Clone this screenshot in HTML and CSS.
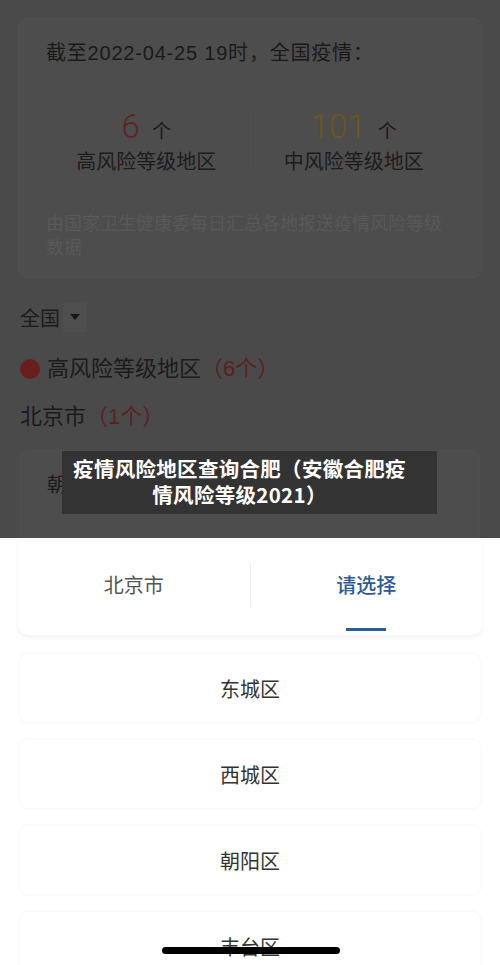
FILE: index.html
```html
<!DOCTYPE html>
<html lang="zh-CN">
<head>
<meta charset="utf-8">
<link rel="stylesheet" href="styles.css">
</head>
<body>
<div class="screen">
  <section class="backdrop">
    <div class="summary">
      <div class="summary-title">截至2022-04-25 19时，全国疫情：</div>
      <div class="stats">
        <div class="stat">
          <div class="stat-num"><span class="num high">6</span><span class="unit">个</span></div>
          <div class="stat-label">高风险等级地区</div>
        </div>
        <div class="stat-divider"></div>
        <div class="stat">
          <div class="stat-num"><span class="num mid">101</span><span class="unit">个</span></div>
          <div class="stat-label">中风险等级地区</div>
        </div>
      </div>
      <div class="summary-note">由国家卫生健康委每日汇总各地报送疫情风险等级数据</div>
    </div>
    <div class="filter">
      <span class="filter-text">全国</span>
      <span class="filter-btn"><svg width="12" height="8" viewBox="0 0 12 8"><path d="M1 1h10L6 7z" fill="#161616"/></svg></span>
    </div>
    <div class="level-head">
      <span class="dot"></span>
      <span>高风险等级地区</span><span class="count">（6个）</span>
    </div>
    <div class="city">北京市<span class="count">（1个）</span></div>
    <div class="district-card">
      <div class="district">朝阳区<span class="count">（1个）</span></div>
    </div>
    <div class="caption">疫情风险地区查询合肥（安徽合肥疫<br>情风险等级2021）</div>
  </section>
  <section class="sheet">
    <div class="tabs">
      <div class="tab">北京市</div>
      <div class="tab-sep"></div>
      <div class="tab active">请选择</div>
    </div>
    <div class="options">
      <div class="option">东城区</div>
      <div class="option">西城区</div>
      <div class="option">朝阳区</div>
      <div class="option">丰台区</div>
    </div>
    <div class="home-bar"></div>
  </section>
</div>
</body>
</html>
```

FILE: styles.css
```css
* { box-sizing: border-box; }
html, body { margin: 0; padding: 0; }
body {
  width: 500px;
  height: 965px;
  overflow: hidden;
  font-family: "Liberation Sans", "Noto Sans CJK SC", sans-serif;
  background: #ffffff;
}
.screen {
  width: 500px;
  height: 965px;
  display: flex;
  flex-direction: column;
  position: relative;
}
.backdrop {
  position: relative;
  height: 538px;
  flex: none;
  background: #4a4a4a;
  padding: 18px 18px 0;
  overflow: hidden;
  color: #1b1b1b;
}
.summary {
  height: 260px;
  background: #4d4d4d;
  border: 1px solid #505050;
  border-radius: 8px;
  padding: 20px 24px 0;
}
.summary-title {
  font-size: 20px;
  line-height: 28px;
  padding-left: 3px;
  letter-spacing: 0.8px;
  color: #1a1a1a;
}
.stats {
  display: flex;
  align-items: center;
  margin-top: 40px;
}
.stat {
  flex: 1;
  display: flex;
  flex-direction: column;
  align-items: center;
}
.stat-num {
  display: flex;
  align-items: baseline;
  height: 40px;
}
.num {
  font-family: Roboto, "Liberation Sans", sans-serif;
  font-weight: 300;
  font-size: 33px;
  line-height: 40px;
}
.num.high { color: #602424; }
.num.mid { color: #6d561a; }
.unit {
  font-size: 19px;
  margin-left: 12px;
  color: #1a1a1a;
}
.stat-label {
  font-size: 20px;
  line-height: 28px;
  margin-top: 1px;
  color: #1c1c1c;
}
.stat-divider {
  width: 1px;
  height: 60px;
  background: #505050;
}
.summary-note {
  margin-top: 36px;
  padding-left: 3px;
  padding-right: 14px;
  font-size: 18px;
  line-height: 24px;
  color: #595959;
}
.filter {
  display: flex;
  align-items: center;
  margin-top: 22px;
  padding-left: 2px;
  height: 34px;
}
.filter-text {
  font-size: 20px;
  color: #1b1b1b;
}
.filter-btn {
  width: 24px;
  height: 30px;
  margin-left: 3px;
  background: #4e4e4e;
  display: flex;
  align-items: center;
  justify-content: center;
}
.level-head {
  display: flex;
  align-items: center;
  margin-top: 20px;
  font-size: 22px;
  line-height: 30px;
  color: #1b1b1b;
  padding-left: 2px;
}
.dot {
  width: 20px;
  height: 20px;
  border-radius: 50%;
  background: #6a1f1c;
  margin-right: 7px;
}
.count { color: #5a2121; }
.city {
  margin-top: 18px;
  font-size: 22px;
  line-height: 30px;
  padding-left: 2px;
  color: #1b1b1b;
}
.district-card {
  margin-top: 18px;
  margin-left: 2px;
  margin-right: 2px;
  height: 120px;
  background: #4d4d4d;
  border: 1px solid #505050;
  border-radius: 8px;
  padding: 20px 26px;
}
.district {
  font-size: 20px;
  line-height: 28px;
  color: #1b1b1b;
}
.caption {
  position: absolute;
  left: 62px;
  top: 451px;
  width: 375px;
  height: 63px;
  background: #333333;
  color: #ffffff;
  font-family: "Noto Sans CJK SC", sans-serif;
  font-weight: 700;
  font-size: 20.5px;
  line-height: 26px;
  text-align: center;
  padding: 4px 20px 0 0;
  letter-spacing: 0.3px;
}
.sheet {
  flex: 1;
  background: #ffffff;
  position: relative;
  display: flex;
  flex-direction: column;
}
.tabs {
  height: 97px;
  display: flex;
  align-items: center;
  background: #ffffff;
  border-radius: 0 0 10px 10px;
  box-shadow: 0 3px 4px rgba(0,0,0,0.05);
  margin: 0 18px;
  position: relative;
}
.tab {
  flex: 1;
  font-family: "Noto Sans CJK SC", sans-serif;
  font-size: 20px;
  line-height: 28px;
  color: #555555;
  padding-bottom: 4px;
  position: relative;
  height: 97px;
  display: flex;
  align-items: center;
  justify-content: center;
}
.tab.active {
  color: #2b5a98;
  font-weight: 500;
}
.tab.active::after {
  content: "";
  position: absolute;
  left: 50%;
  margin-left: -20px;
  bottom: 4px;
  width: 40px;
  height: 3px;
  background: #2d5b9a;
}
.tab-sep {
  width: 1px;
  height: 44px;
  background: #eeeeee;
  margin-top: -4px;
}
.options {
  display: flex;
  flex-direction: column;
  gap: 18px;
  padding: 19px 20px 0;
}
.option {
  height: 68px;
  border-radius: 8px;
  background: #ffffff;
  box-shadow: 0 0 4px rgba(0,0,0,0.06);
  display: flex;
  align-items: center;
  justify-content: center;
  font-size: 20px;
  color: #333333;
}
.home-bar {
  position: absolute;
  left: 162px;
  top: 409px;
  width: 178px;
  height: 7px;
  border-radius: 4px;
  background: #000000;
}
```
